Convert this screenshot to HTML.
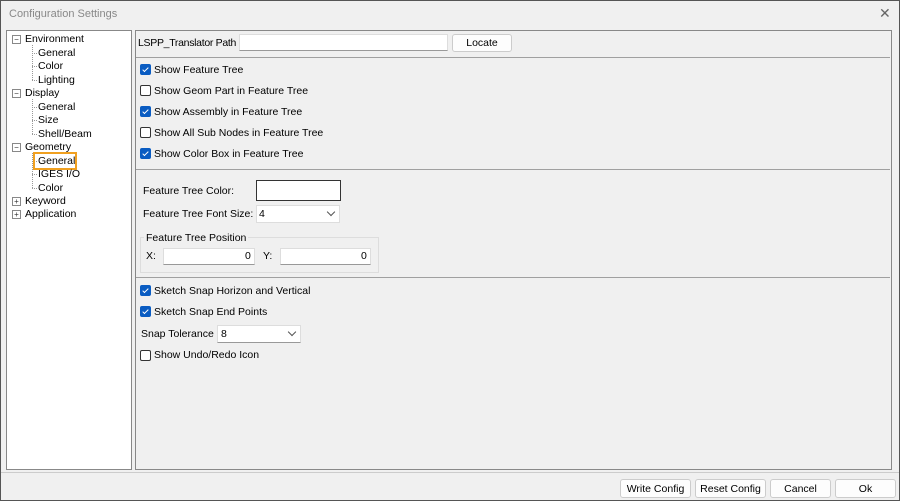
<!DOCTYPE html><html><head><style>
body{margin:0;width:900px;height:501px;background:#f0f0f0;font-family:"Liberation Sans",sans-serif;font-size:10.5px;color:#000;position:relative;overflow:hidden}
.a{position:absolute;white-space:nowrap}
.frame{position:absolute;left:0;top:0;width:898px;height:499px;border:1px solid #555}
.cb{position:absolute;width:9px;height:9px;border:1px solid #333;border-radius:2px;background:#fff}
.cb.on{background:#0a5cc2;border-color:#0a5cc2}
.cb.on:after{content:"";position:absolute;left:3px;top:1px;width:2px;height:5px;border:solid #fff;border-width:0 1px 1px 0;transform:rotate(45deg)}
.inp{position:absolute;background:#fff;border:1px solid #ddd;border-bottom:1px solid #999;box-sizing:border-box}
.btn{position:absolute;background:#fdfdfd;border:1px solid #ccc;border-radius:3px;box-sizing:border-box;text-align:center;line-height:18px}
.hr{position:absolute;height:1px;background:#a0a0a0}
.pm{position:absolute;width:7px;height:7px;border:1px solid #888;background:#fff;font-size:8px;line-height:7px;text-align:center;color:#333}
.dl{position:absolute;border-left:1px dotted #999}
.dh{position:absolute;border-top:1px dotted #999;width:5px}
.chev{position:absolute;width:5px;height:5px;border:solid #555;border-width:0 1px 1px 0;transform:rotate(45deg)}
</style></head><body>
<div class="frame"></div>
<div class="a" style="left:9px;top:8px;color:#888;font-size:11px">Configuration Settings</div>
<div class="a" style="left:879px;top:5px;color:#666;font-size:14px">✕</div>
<div class="a" style="left:6px;top:30px;width:124px;height:438px;background:#fff;border:1px solid #888"></div>
<div class="a" style="left:135px;top:30px;width:755px;height:438px;border:1px solid #888"></div>
<div class="pm" style="left:12px;top:35px">−</div><div class="a" style="left:25px;top:33px">Environment</div>
<div class="dl" style="left:32px;top:45px;height:35px"></div>
<div class="dh" style="left:32px;top:53px"></div><div class="a" style="left:38px;top:47px">General</div>
<div class="dh" style="left:32px;top:66px"></div><div class="a" style="left:38px;top:60px">Color</div>
<div class="dh" style="left:32px;top:80px"></div><div class="a" style="left:38px;top:74px">Lighting</div>
<div class="pm" style="left:12px;top:89px">−</div><div class="a" style="left:25px;top:87px">Display</div>
<div class="dl" style="left:32px;top:99px;height:35px"></div>
<div class="dh" style="left:32px;top:107px"></div><div class="a" style="left:38px;top:101px">General</div>
<div class="dh" style="left:32px;top:120px"></div><div class="a" style="left:38px;top:114px">Size</div>
<div class="dh" style="left:32px;top:134px"></div><div class="a" style="left:38px;top:128px">Shell/Beam</div>
<div class="pm" style="left:12px;top:143px">−</div><div class="a" style="left:25px;top:141px">Geometry</div>
<div class="dl" style="left:32px;top:153px;height:35px"></div>
<div class="dh" style="left:32px;top:161px"></div>
<div class="a" style="left:33px;top:152px;width:40px;height:14px;border:2px solid #f0a020"></div>
<div class="a" style="left:38px;top:155px">General</div>
<div class="dh" style="left:32px;top:174px"></div><div class="a" style="left:38px;top:168px">IGES I/O</div>
<div class="dh" style="left:32px;top:188px"></div><div class="a" style="left:38px;top:182px">Color</div>
<div class="pm" style="left:12px;top:197px">+</div><div class="a" style="left:25px;top:195px">Keyword</div>
<div class="pm" style="left:12px;top:210px">+</div><div class="a" style="left:25px;top:208px">Application</div>
<div class="inp" style="left:239px;top:34px;width:209px;height:17px"></div>
<div class="a" style="left:138px;top:37px;letter-spacing:-0.3px">LSPP_Translator Path</div>
<div class="btn" style="left:452px;top:34px;width:60px;height:18px;line-height:16px">Locate</div>
<div class="hr" style="left:136px;top:57px;width:754px"></div>
<div class="cb on" style="left:140px;top:64px"></div><div class="a" style="left:154px;top:64px">Show Feature Tree</div>
<div class="cb" style="left:140px;top:85px"></div><div class="a" style="left:154px;top:85px">Show Geom Part in Feature Tree</div>
<div class="cb on" style="left:140px;top:106px"></div><div class="a" style="left:154px;top:106px">Show Assembly in Feature Tree</div>
<div class="cb" style="left:140px;top:127px"></div><div class="a" style="left:154px;top:127px">Show All Sub Nodes in Feature Tree</div>
<div class="cb on" style="left:140px;top:148px"></div><div class="a" style="left:154px;top:148px">Show Color Box in Feature Tree</div>
<div class="hr" style="left:136px;top:169px;width:754px"></div>
<div class="a" style="left:143px;top:185px">Feature Tree Color:</div>
<div class="a" style="left:256px;top:180px;width:83px;height:19px;border:1px solid #333;background:#fff"></div>
<div class="a" style="left:143px;top:208px">Feature Tree Font Size:</div>
<div class="inp" style="left:256px;top:205px;width:84px;height:18px;border-color:#ddd"></div>
<div class="a" style="left:259px;top:208px">4</div><div class="chev" style="left:328px;top:209px"></div>
<div class="a" style="left:140px;top:237px;width:237px;height:34px;border:1px solid #ddd"></div>
<div class="a" style="left:144px;top:232px;background:#f0f0f0;padding:0 2px">Feature Tree Position</div>
<div class="a" style="left:146px;top:250px">X:</div>
<div class="inp" style="left:163px;top:248px;width:92px;height:17px"></div><div class="a" style="left:245px;top:250px">0</div>
<div class="a" style="left:263px;top:250px">Y:</div>
<div class="inp" style="left:280px;top:248px;width:91px;height:17px"></div><div class="a" style="left:361px;top:250px">0</div>
<div class="hr" style="left:136px;top:277px;width:754px"></div>
<div class="cb on" style="left:140px;top:285px"></div><div class="a" style="left:154px;top:285px">Sketch Snap Horizon and Vertical</div>
<div class="cb on" style="left:140px;top:306px"></div><div class="a" style="left:154px;top:306px">Sketch Snap End Points</div>
<div class="a" style="left:141px;top:328px">Snap Tolerance</div>
<div class="inp" style="left:217px;top:325px;width:84px;height:18px"></div>
<div class="a" style="left:221px;top:328px">8</div><div class="chev" style="left:289px;top:329px"></div>
<div class="cb" style="left:140px;top:350px"></div><div class="a" style="left:154px;top:349px">Show Undo/Redo Icon</div>
<div class="hr" style="left:1px;top:472px;width:898px;background:#ccc"></div>
<div class="btn" style="left:620px;top:479px;width:71px;height:19px">Write Config</div>
<div class="btn" style="left:695px;top:479px;width:71px;height:19px">Reset Config</div>
<div class="btn" style="left:770px;top:479px;width:61px;height:19px">Cancel</div>
<div class="btn" style="left:835px;top:479px;width:61px;height:19px">Ok</div>
</body></html>
